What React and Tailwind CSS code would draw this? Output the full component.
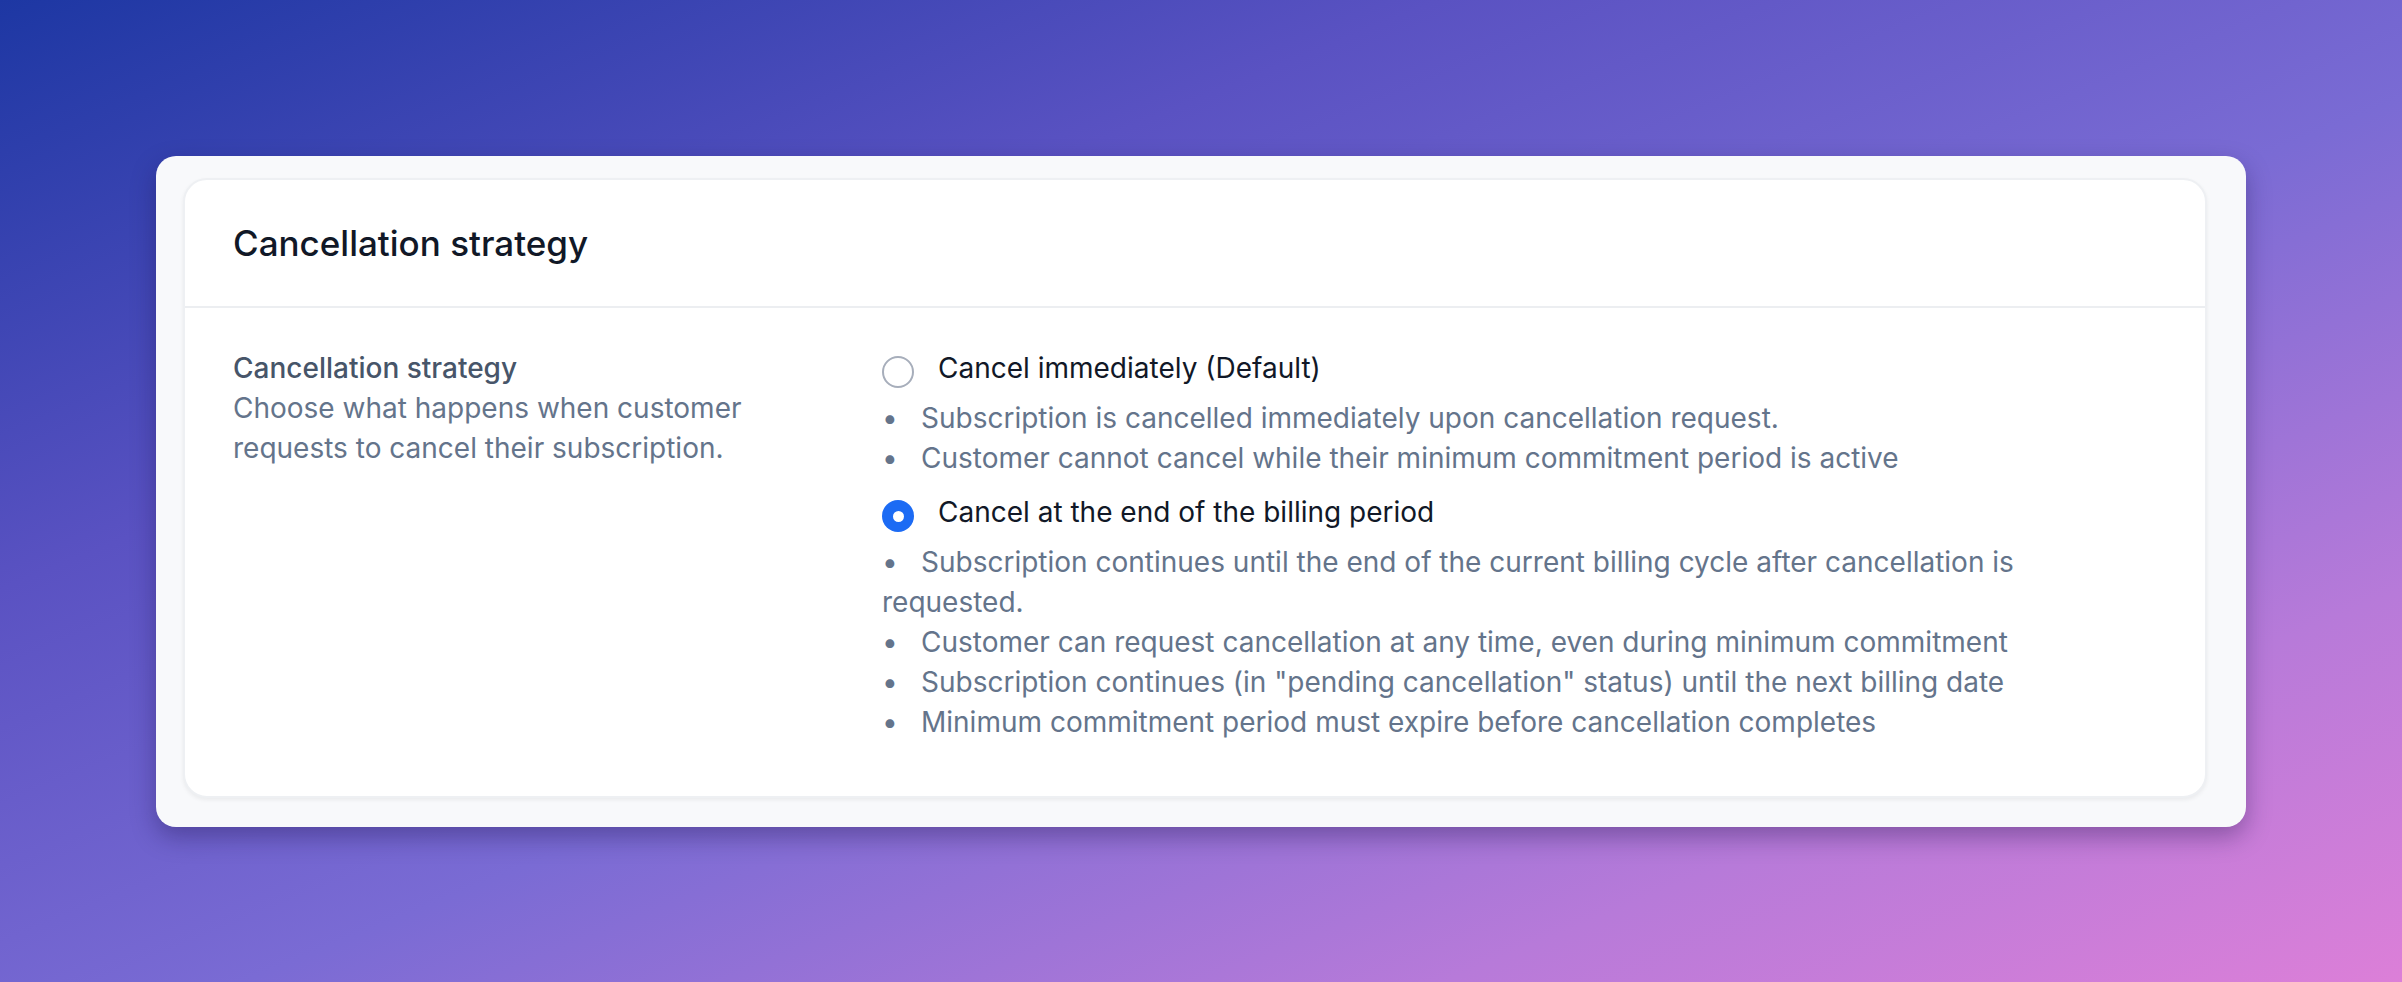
const firstPoints = [
  'Subscription is cancelled immediately upon cancellation request.',
  'Customer cannot cancel while their minimum commitment period is active',
];

const secondPoints = [
  'Subscription continues until the end of the current billing cycle after cancellation is requested.',
  'Customer can request cancellation at any time, even during minimum commitment',
  'Subscription continues (in "pending cancellation" status) until the next billing date',
  'Minimum commitment period must expire before cancellation completes',
];

function Radio({ checked }) {
  if (checked) {
    return (
      <span className="mt-[8px] flex h-[32px] w-[32px] shrink-0 items-center justify-center rounded-full bg-[#1c6bf4]">
        <span className="h-[11px] w-[11px] rounded-full bg-white" />
      </span>
    );
  }
  return <span className="mt-[8px] h-[32px] w-[32px] shrink-0 rounded-full border-2 border-[#a7aebb] bg-white" />;
}

function Option({ checked, label, points, className = '' }) {
  return (
    <div className={className}>
      <label className="flex items-start gap-[24px]">
        <Radio checked={checked} />
        <span className="text-[28px] leading-[40px] text-[#111827]">{label}</span>
      </label>
      <ul className="mt-[10px] text-[28px] leading-[40px] text-[#64748b]">
        {points.map(p => (
          <li key={p}>
            <span className="inline-block w-[39px]">•</span>
            {p}
          </li>
        ))}
      </ul>
    </div>
  );
}

export default function App() {
  return (
    <div className="min-h-screen bg-[linear-gradient(to_bottom_right,#1d37a3_0%,#5a52c2_30%,#7a6bd4_55%,#b77ad9_80%,#dc7fd8_100%)] p-[156px] font-['Inter',sans-serif] antialiased">
      <div className="rounded-[20px] bg-[#f8f9fb] pt-[22px] pr-[39px] pb-[29px] pl-[27px] shadow-[0_10px_24px_rgba(25,15,70,0.35)]">
        <div className="rounded-[24px] border-2 border-[#eef0f3] bg-white shadow-[0_2px_4px_rgba(0,0,0,0.06)]">
          {/* header */}
          <div className="flex h-[128px] items-center border-b-2 border-[#eceef1] px-[48px]">
            <h2 className="text-[35px] font-medium leading-[56px] text-[#111827]">Cancellation strategy</h2>
          </div>

          <div className="grid grid-cols-[617px_1fr] gap-x-[32px] px-[48px] pt-[40px] pb-[54px]">
            <div className="max-w-[590px]">
              <div className="text-[28px] font-medium leading-[40px] text-[#475569]">Cancellation strategy</div>
              <p className="text-[28px] leading-[40px] text-[#64748b]">
                Choose what happens when customer requests to cancel their subscription.
              </p>
            </div>

            <div>
              <Option label="Cancel immediately (Default)" points={firstPoints} />
              <Option checked label="Cancel at the end of the billing period" points={secondPoints} className="mt-[14px]" />
            </div>
          </div>
        </div>
      </div>
    </div>
  );
}
